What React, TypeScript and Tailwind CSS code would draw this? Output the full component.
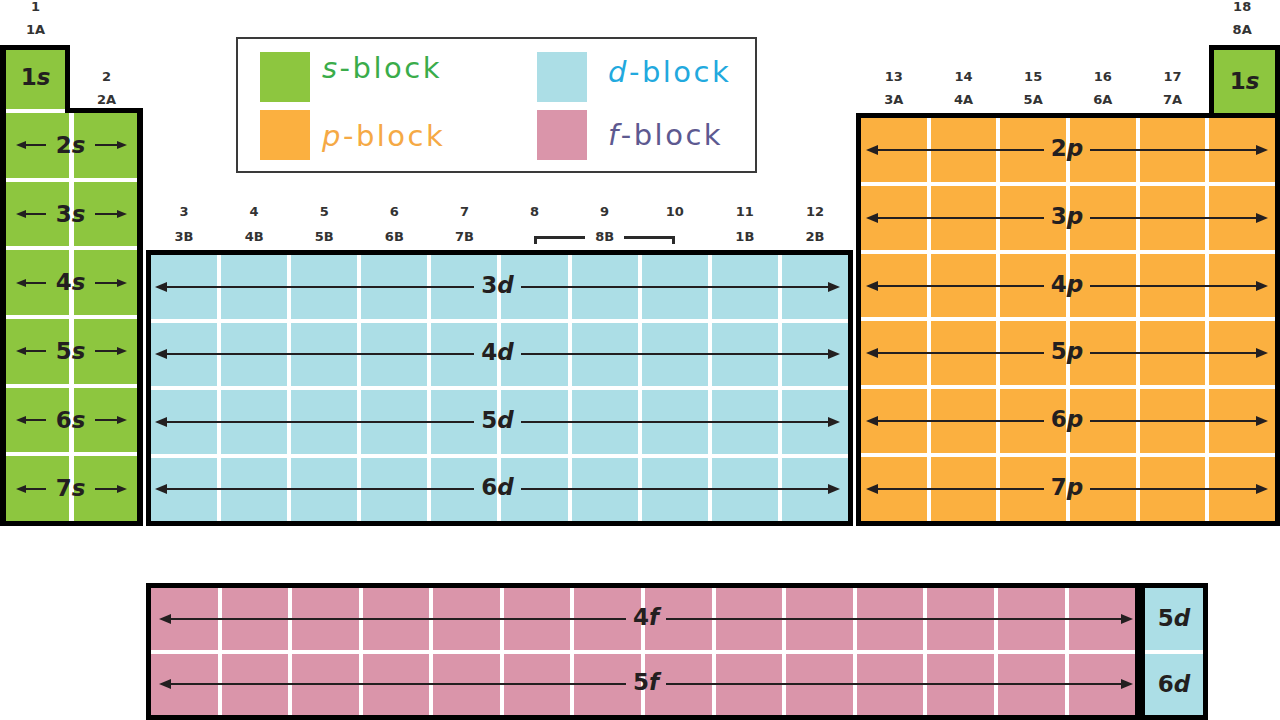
import React from "react";

const INK = "#231f20";

function Head({ dir, small }: { dir: "l" | "r"; small?: boolean }) {
  const w = small ? 10 : 12;
  const h = small ? 8 : 10;
  const pts = dir === "l" ? `0,${h / 2} ${w},0 ${w},${h}` : `${w},${h / 2} 0,0 0,${h}`;
  return (
    <svg width={w} height={h} viewBox={`0 0 ${w} ${h}`} className="shrink-0">
      <polygon points={pts} fill={INK} />
    </svg>
  );
}

function Tag({ n, l, size = "text-[23px]" }: { n: string; l: string; size?: string }) {
  return (
    <span className={`${size} font-bold leading-none text-[#231f20] whitespace-nowrap`}>
      {n}
      <i>{l}</i>
    </span>
  );
}

function LongArrow({ n, l }: { n: string; l: string }) {
  return (
    <div className="flex items-center w-full">
      <Head dir="l" />
      <div className="flex-1 h-[2px] bg-[#231f20]" />
      <div className="px-[7px]">
        <Tag n={n} l={l} />
      </div>
      <div className="flex-1 h-[2px] bg-[#231f20]" />
      <Head dir="r" />
    </div>
  );
}

function ShortArrows({ n }: { n: string }) {
  return (
    <div className="flex items-center justify-center gap-[10px] w-full">
      <div className="flex items-center w-[30px]">
        <Head dir="l" small />
        <div className="flex-1 h-[2px] bg-[#231f20]" />
      </div>
      <Tag n={n} l="s" />
      <div className="flex items-center w-[32px]">
        <div className="flex-1 h-[2px] bg-[#231f20]" />
        <Head dir="r" small />
      </div>
    </div>
  );
}

function Row({
  cols,
  cell,
  gap = "gap-[4px]",
  pad = "px-[6px]",
  children,
}: {
  cols: number;
  cell: string;
  gap?: string;
  pad?: string;
  children?: React.ReactNode;
}) {
  return (
    <div className={`relative flex-1 flex ${gap}`}>
      {Array.from({ length: cols }).map((_, i) => (
        <div key={i} className={`flex-1 ${cell}`} />
      ))}
      <div className={`absolute inset-0 flex items-center ${pad}`}>{children}</div>
    </div>
  );
}

function Group({ a, b }: { a: string; b: string }) {
  return (
    <div className="flex flex-col items-center gap-[9px] text-[13px] font-bold leading-[14px] text-[#333]">
      <span>{a}</span>
      <span>{b}</span>
    </div>
  );
}

const S = "bg-[#8dc63f]";
const P = "bg-[#fbb040]";
const D = "bg-[#acdee6]";
const F = "bg-[#da95aa]";

function Legend() {
  const item = "flex items-start";
  const sw = "w-[50px] h-[50px] shrink-0";
  const txt = "text-[29px] leading-none tracking-[2.5px] whitespace-nowrap";
  return (
    <div className="ml-[90px] mt-[37px] w-[521px] h-[136px] border-2 border-[#3a3a3a] bg-white pt-[13px] pl-[22px] grid grid-cols-[277px_1fr] gap-y-[8px] content-start">
      <div className={item}>
        <div className={`${sw} ${S}`} />
        <span className={`${txt} ml-[12px] mt-[2px] text-[#3aac4a]`}>
          <i>s</i>-block
        </span>
      </div>
      <div className={item}>
        <div className={`${sw} ${D}`} />
        <span className={`${txt} ml-[21px] mt-[6px] text-[#22a9de]`}>
          <i>d</i>-block
        </span>
      </div>
      <div className={item}>
        <div className={`${sw} ${P}`} />
        <span className={`${txt} ml-[12px] mt-[12px] text-[#f5a945]`}>
          <i>p</i>-block
        </span>
      </div>
      <div className={item}>
        <div className={`${sw} ${F}`} />
        <span className={`${txt} ml-[21px] mt-[11px] text-[#5d5990]`}>
          <i>f</i>-block
        </span>
      </div>
    </div>
  );
}

export default function App() {
  const dNums = ["3", "4", "5", "6", "7", "8", "9", "10", "11", "12"];
  const pGroups = [
    ["13", "3A"],
    ["14", "4A"],
    ["15", "5A"],
    ["16", "6A"],
    ["17", "7A"],
  ];

  return (
    <div className="w-[1280px] h-[720px] overflow-hidden bg-white font-['DejaVu_Sans',sans-serif]">
      <div className="flex items-start h-[526px]">
        {/* s-block */}
        <div className="w-[143px] shrink-0 flex flex-col">
          <div className="h-[45px] w-[71px]">
            <Group a="1" b="1A" />
          </div>
          <div className="flex h-[68px]">
            <div className="w-[70px] border-t-[5px] border-l-[6px] border-r-[5px] border-black flex flex-col">
              <div className={`flex-1 ${S} flex items-center justify-center pb-[5px]`}>
                <Tag n="1" l="s" />
              </div>
              <div className="h-[4px] bg-white" />
            </div>
            <div className="w-[73px] border-b-[5px] border-black flex flex-col justify-end pb-[1px]">
              <Group a="2" b="2A" />
            </div>
          </div>
          <div className="h-[413px] border-l-[6px] border-r-[6px] border-b-[5px] border-black bg-white flex flex-col gap-[4px]">
            {["2", "3", "4", "5", "6", "7"].map((n) => (
              <Row key={n} cols={2} cell={S} gap="gap-[5px]" pad="px-0">
                <ShortArrows n={n} />
              </Row>
            ))}
          </div>
        </div>

        {/* d-block */}
        <div className="ml-[3px] w-[707px] shrink-0 flex flex-col">
          <Legend />
          <div className="mt-[32px] mb-[6px] px-[5px] grid grid-cols-10 gap-x-[4px] gap-y-[11px] text-[13px] font-bold leading-[14px] text-[#333] text-center">
            {dNums.map((n) => (
              <span key={n}>{n}</span>
            ))}
            {["3B", "4B", "5B", "6B", "7B"].map((n) => (
              <span key={n}>{n}</span>
            ))}
            <div className="col-span-3 px-[33px] flex items-start">
              <div className="flex-1 h-[8px] mt-[6px] border-t-[3px] border-l-[3px] border-[#2a2a2a]" />
              <span className="px-[10px]">8B</span>
              <div className="flex-1 h-[8px] mt-[6px] border-t-[3px] border-r-[3px] border-[#2a2a2a]" />
            </div>
            <span>1B</span>
            <span>2B</span>
          </div>
          <div className="h-[276px] border-[5px] border-black bg-white flex flex-col gap-[4px]">
            {["3", "4", "5", "6"].map((n) => (
              <Row key={n} cols={10} cell={D} pad="pl-[4px] pr-[8px]">
                <LongArrow n={n} l="d" />
              </Row>
            ))}
          </div>
        </div>

        {/* p-block */}
        <div className="ml-[3px] w-[424px] shrink-0 flex flex-col">
          <div className="h-[113px] px-[5px] grid grid-cols-6 gap-x-[4px]">
            {pGroups.map(([a, b]) => (
              <div key={a} className="flex flex-col justify-end pb-[6px]">
                <Group a={a} b={b} />
              </div>
            ))}
            <div className="flex flex-col">
              <div className="h-[45px]">
                <Group a="18" b="8A" />
              </div>
              <div className="h-[68px] -mr-[5px] border-t-[5px] border-x-[5px] border-black">
                <div className={`h-full ${S} flex items-center justify-center`}>
                  <Tag n="1" l="s" />
                </div>
              </div>
            </div>
          </div>
          <div className="h-[413px] border-[5px] border-black bg-white flex flex-col gap-[4px]">
            {["2", "3", "4", "5", "6", "7"].map((n) => (
              <Row key={n} cols={6} cell={P} pad="pl-[5px] pr-[7px]">
                <LongArrow n={n} l="p" />
              </Row>
            ))}
          </div>
        </div>
      </div>

      {/* f-block */}
      <div className="mt-[57px] pl-[146px] flex">
        <div className="w-[994px] h-[137px] border-[5px] border-black bg-white flex flex-col gap-[4px]">
          {["4", "5"].map((n) => (
            <Row key={n} cols={14} cell={F} pad="pl-[8px] pr-[2px]">
              <LongArrow n={n} l="f" />
            </Row>
          ))}
        </div>
        <div className="w-[68px] h-[137px] border-[5px] border-black bg-white flex flex-col gap-[4px]">
          {["5", "6"].map((n) => (
            <div key={n} className={`flex-1 ${D} flex items-center justify-center`}>
              <Tag n={n} l="d" />
            </div>
          ))}
        </div>
      </div>
    </div>
  );
}
